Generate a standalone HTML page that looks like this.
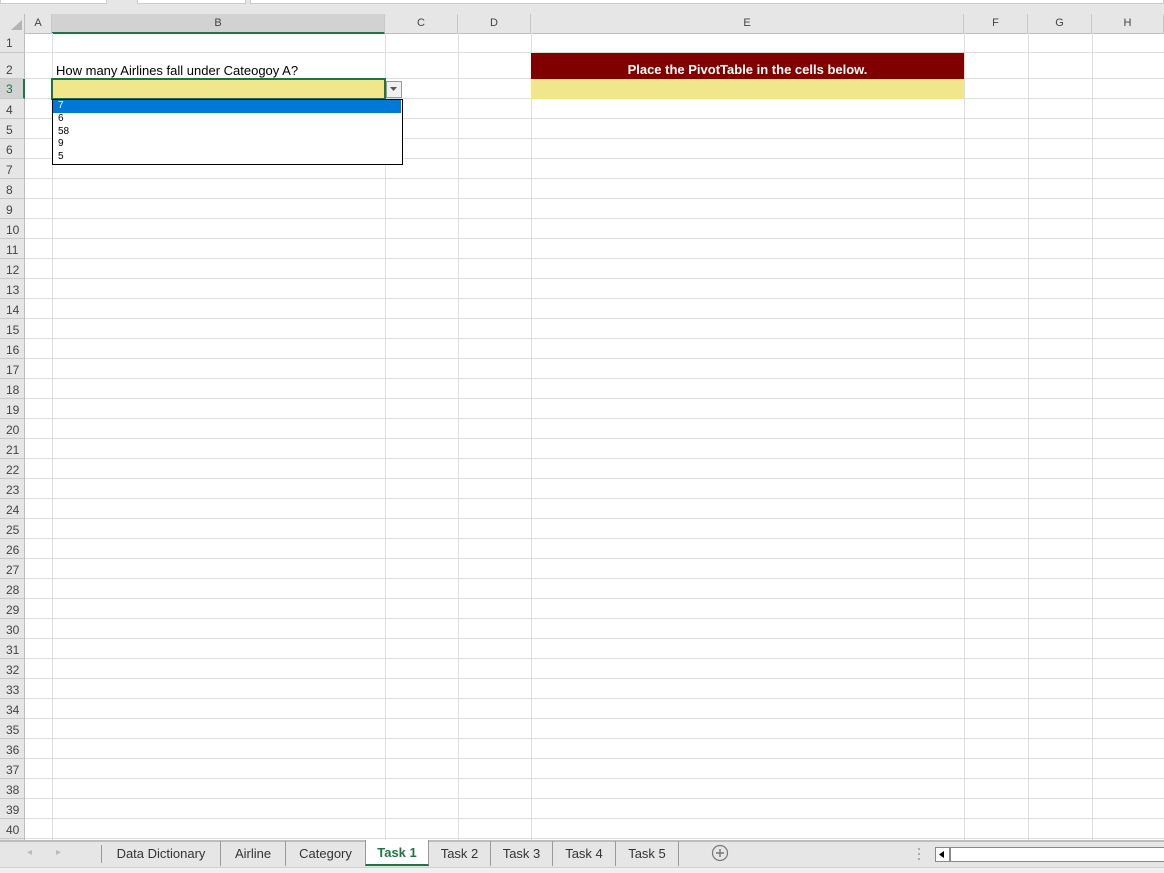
<!DOCTYPE html><html><head><style>
*{margin:0;padding:0;box-sizing:border-box}
body{width:1164px;height:873px;position:relative;overflow:hidden;background:#fff;font-family:"Liberation Sans",Calibri,sans-serif}
.a{position:absolute}
.ch{position:absolute;top:14px;height:20px;font-size:11px;color:#444;text-align:center;line-height:19px;border-right:1px solid #c8c8c8;border-bottom:1px solid #bdbdbd;background:#e6e6e6}
.rh{position:absolute;left:0;width:25px;font-size:12px;color:#444;padding-left:6px;background:#e6e6e6;border-bottom:1px solid #c8c8c8;border-right:1px solid #bdbdbd}
.v{position:absolute;top:33px;height:807px;width:1px;background:#dedede}
.tab{position:absolute;top:841px;height:25px;font-size:13px;color:#333;line-height:25px;text-align:center;border-right:1px solid #999}
</style></head><body>
<div class="a" style="left:0;top:0;width:1164px;height:14px;background:#e6e6e6"></div>
<div class="a" style="left:0;top:0;width:107px;height:4px;background:#fff;border:1px solid #ccc;border-top:0"></div>
<div class="a" style="left:137px;top:0;width:109px;height:4px;background:#fff;border:1px solid #ccc;border-top:0"></div>
<div class="a" style="left:250px;top:0;width:914px;height:4px;background:#fff;border:1px solid #ccc;border-top:0"></div>
<div class="a" style="left:0;top:14px;width:25px;height:20px;background:#e6e6e6;border-right:1px solid #bdbdbd;border-bottom:1px solid #bdbdbd"></div>
<svg class="a" style="left:9px;top:19px" width="14" height="12"><path d="M13 1L13 11L2 11Z" fill="#b4b4b4"/></svg>
<div class="ch" style="left:25px;width:27px">A</div>
<div class="ch" style="left:52px;width:333px;background:#d2d2d2;border-bottom:2px solid #217346">B</div>
<div class="ch" style="left:385px;width:73px">C</div>
<div class="ch" style="left:458px;width:73px">D</div>
<div class="ch" style="left:531px;width:433px">E</div>
<div class="ch" style="left:964px;width:64px">F</div>
<div class="ch" style="left:1028px;width:64px">G</div>
<div class="ch" style="left:1092px;width:72px">H</div>
<div class="a" style="left:25px;top:99px;width:1139px;height:741px;background:repeating-linear-gradient(to bottom,transparent 0,transparent 19px,#dedede 19px,#dedede 20px)"></div>
<div class="a" style="left:25px;top:52px;width:1139px;height:1px;background:#dedede"></div>
<div class="a" style="left:25px;top:78px;width:1139px;height:1px;background:#dedede"></div>
<div class="a" style="left:25px;top:98px;width:1139px;height:1px;background:#dedede"></div>
<div class="v" style="left:52px"></div><div class="v" style="left:385px"></div><div class="v" style="left:458px"></div><div class="v" style="left:531px"></div><div class="v" style="left:964px"></div><div class="v" style="left:1028px"></div><div class="v" style="left:1092px"></div>
<div class="rh" style="top:33px;height:20px;line-height:20px">1</div>
<div class="rh" style="top:53px;height:26px;line-height:34px">2</div>
<div class="rh" style="top:79px;height:20px;line-height:20px;background:#d2d2d2;border-right:2px solid #217346;color:#217346">3</div>
<div class="a" style="left:0;top:99px;width:25px;height:741px;background:repeating-linear-gradient(to bottom,#e6e6e6 0,#e6e6e6 19px,#c8c8c8 19px,#c8c8c8 20px);border-right:1px solid #bdbdbd"></div>
<div class="a" style="left:6px;top:100px;font-size:12px;line-height:20px;color:#444">4<br>5<br>6<br>7<br>8<br>9<br>10<br>11<br>12<br>13<br>14<br>15<br>16<br>17<br>18<br>19<br>20<br>21<br>22<br>23<br>24<br>25<br>26<br>27<br>28<br>29<br>30<br>31<br>32<br>33<br>34<br>35<br>36<br>37<br>38<br>39<br>40</div>
<div class="a" style="left:56px;top:63px;font-size:13px;color:#000">How many Airlines fall under Cateogoy A?</div>
<div class="a" style="left:531px;top:53px;width:433px;height:26px;background:#800000;color:#fff;font-weight:bold;font-size:13px;text-align:center;line-height:34px">Place the PivotTable in the cells below.</div>
<div class="a" style="left:531px;top:79px;width:433px;height:20px;background:#f0e68c"></div>
<div class="a" style="left:51px;top:78px;width:335px;height:22px;background:#f0e68c;border:2px solid #217346"></div>
<div class="a" style="left:386px;top:81px;width:16px;height:17px;background:#f0f0f0;border:1px solid #999"></div>
<svg class="a" style="left:390px;top:87px" width="8" height="5"><path d="M0 0H7L3.5 4Z" fill="#555"/></svg>
<div class="a" style="left:52px;top:99px;width:351px;height:66px;background:#fff;border:1px solid #000"></div>
<div class="a" style="left:53px;top:100px;width:348px;height:13px;background:#0078d7"></div>
<div class="a" style="left:58px;top:100px;font-size:10px;line-height:12.8px;color:#000"><span style="color:#fff">7</span><br>6<br>58<br>9<br>5</div>
<div class="a" style="left:0;top:840px;width:1164px;height:33px;background:#e6e6e6;border-top:2px solid #bdbdbd"></div>
<div class="a" style="left:0;top:867px;width:1164px;height:6px;background:#f0f0f0;border-top:1px solid #d0d0d0"></div>
<div class="a" style="left:27px;top:847px;font-size:10px;color:#bbb">◂</div>
<div class="a" style="left:56px;top:847px;font-size:10px;color:#bbb">▸</div>
<div class="a" style="left:101px;top:845px;width:1px;height:18px;background:#999"></div>
<div class="tab" style="left:102px;width:119px">Data Dictionary</div>
<div class="tab" style="left:221px;width:65px">Airline</div>
<div class="tab" style="left:286px;width:79px;border-right:0">Category</div>
<div class="tab" style="left:365px;width:64px;top:840px;height:26px;background:#fff;color:#217346;font-weight:bold;border-left:1px solid #999;border-bottom:2px solid #217346">Task 1</div>
<div class="tab" style="left:429px;width:62px">Task 2</div>
<div class="tab" style="left:491px;width:62px">Task 3</div>
<div class="tab" style="left:553px;width:63px">Task 4</div>
<div class="tab" style="left:616px;width:63px">Task 5</div>
<svg class="a" style="left:711px;top:844px" width="18" height="18"><circle cx="9" cy="9" r="7.5" fill="none" stroke="#777" stroke-width="1.2"/><path d="M9 5V13M5 9H13" stroke="#777" stroke-width="1.4"/></svg>
<div class="a" style="left:918px;top:848px;width:2px;height:12px;background:repeating-linear-gradient(#aaa 0 2px,transparent 2px 5px)"></div>
<div class="a" style="left:935px;top:847px;width:229px;height:15px;background:#fff;border:1px solid #888;border-right:0"></div>
<div class="a" style="left:949px;top:847px;width:2px;height:15px;background:#888"></div>
<svg class="a" style="left:939px;top:851px" width="6" height="8"><path d="M5 0V7L0 3.5Z" fill="#000"/></svg>
</body></html>
